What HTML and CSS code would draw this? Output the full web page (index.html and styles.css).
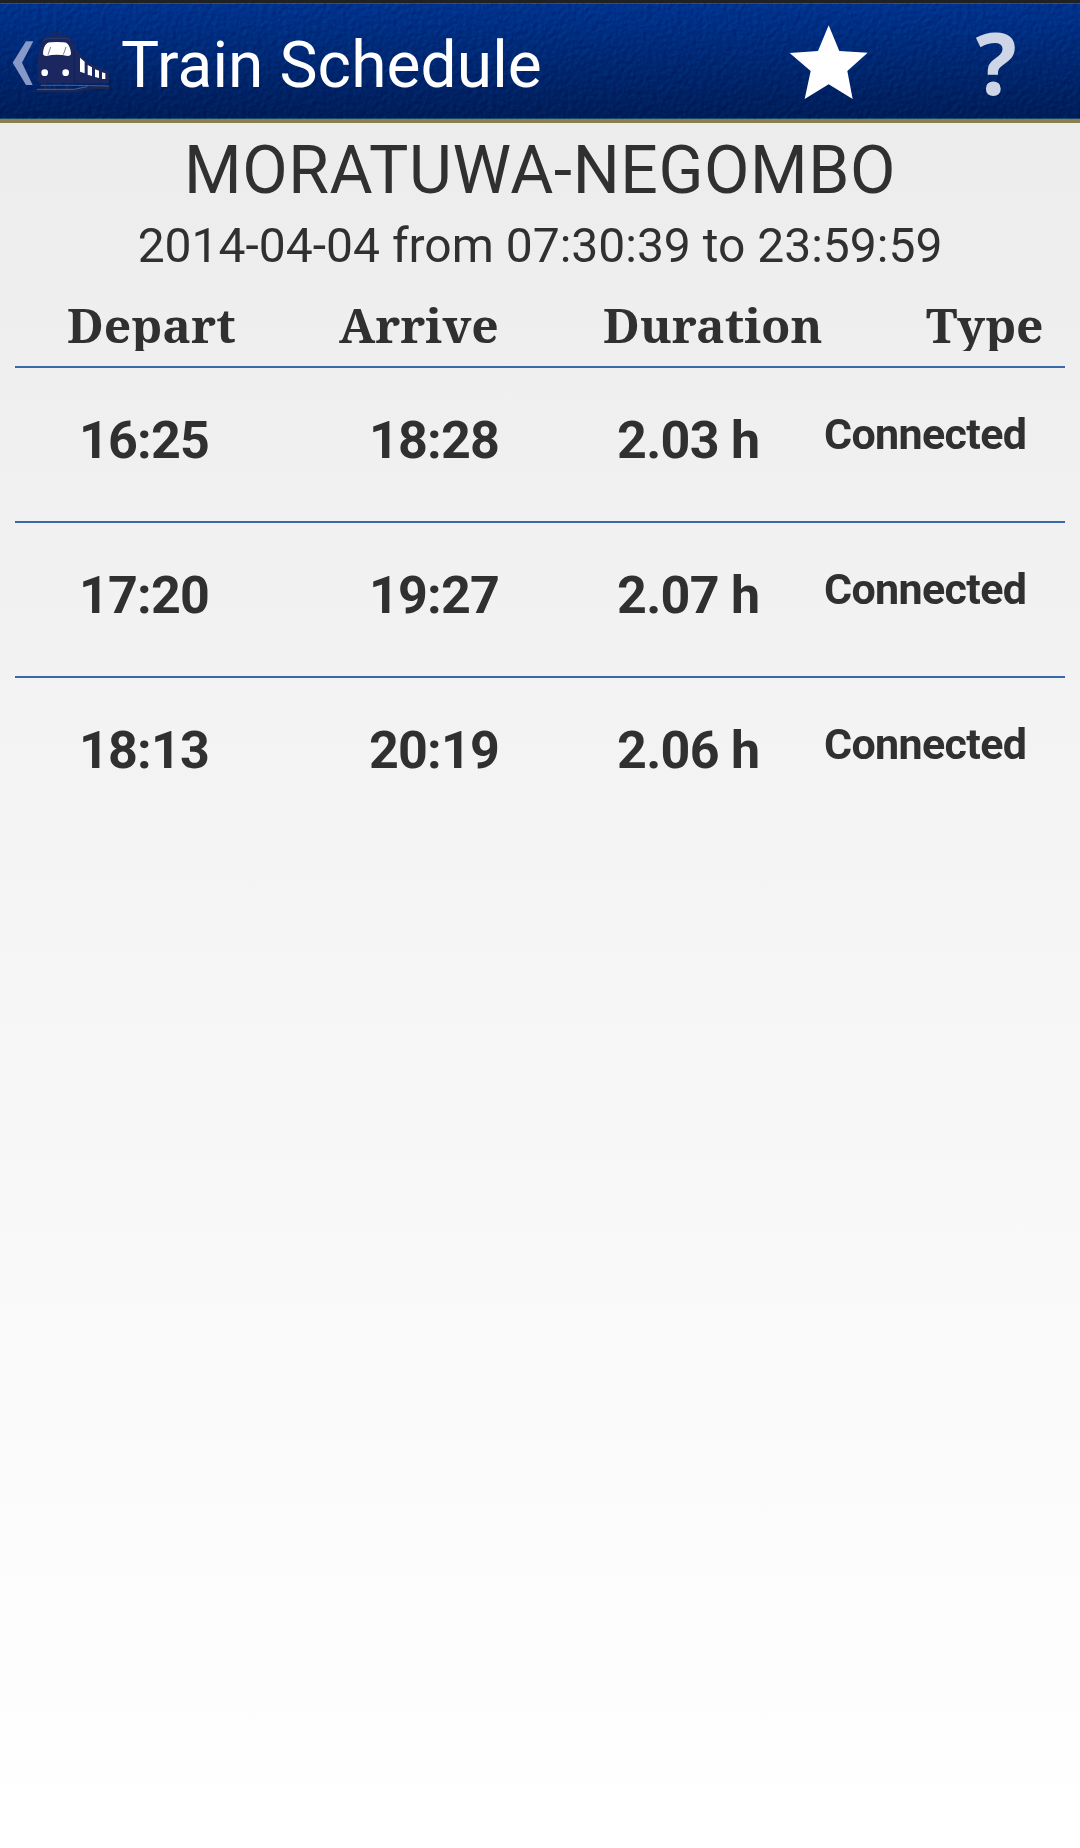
FILE: index.html
```
<!DOCTYPE html>
<html lang="en">
<head>
    <meta charset="UTF-8">
    <meta name="viewport" content="width=device-width, initial-scale=1.0">
    <title>Train Schedule</title>
    <link rel="stylesheet" href="styles.css">
</head>
<body>

    <header class="bar">
        <!-- leather grain -->
        <svg class="grain" width="1080" height="116">
            <filter id="leather" x="0" y="0" width="100%" height="100%" color-interpolation-filters="sRGB">
                <feTurbulence type="fractalNoise" baseFrequency="0.2" numOctaves="2" seed="4"/>
                <feDiffuseLighting surfaceScale="1.6" diffuseConstant="0.7" lighting-color="#fff">
                    <feDistantLight azimuth="225" elevation="45"/>
                </feDiffuseLighting>
            </filter>
            <rect width="1080" height="116" filter="url(#leather)"/>
        </svg>
        <svg class="back" width="24" height="46" viewBox="33 120 72 138">
            <path d="M78 124h22l-34 64 32 67H78L38 188z" fill="#8699c8"/>
        </svg>
        <svg class="train" width="74" height="66" viewBox="108 90 222 198">
            <path d="M157 104v-6h26v6" fill="none" stroke="#1c2a60" stroke-width="3"/>
            <path d="M114 172Q118 132 132 112Q136 107 148 106H198Q208 107 213 114L226 142Q236 160 257 181Q276 197 327 214V250H122Q113 249 113 238z" fill="#1b2860"/>
            <path d="M130 124Q134 117 144 115H198Q206 116 210 122" fill="none" stroke="#33457c" stroke-width="2"/>
            <path d="M129 160Q130 138 142 129Q148 126 170 126Q194 126 200 129Q211 138 213 160Q213 168 203 168Q170 161 139 168Q129 168 129 160z" fill="#fff"/>
            <path d="M152 141l-8 23M198 141l-8 23" stroke="#38456e" stroke-width="2"/>
            <circle cx="134" cy="218" r="10" fill="#fff"/>
            <circle cx="197" cy="218" r="10" fill="#fff"/>
            <path d="M223 150V252" stroke="#101c4c" stroke-width="2"/>
            <path d="M240 173l14 12v35l-14-5zM263 195l13 7v26l-13-4zM285 208l12 4v22l-12-3zM306 217l10 3v17h-10z" fill="#fff"/>
            <path d="M111 273H225L272 263H327M135 250v20M163 250v20M200 250v20" fill="none" stroke="#1c2750" stroke-width="8"/>
            <path d="M122 256H222L327 258M111 268H222L262 260" fill="none" stroke="#6b7fa8" stroke-width="2"/>
        </svg>
        <h1 class="title">Train Schedule</h1>
        <svg class="star" width="80" height="76" viewBox="84 72 240 228">
            <path d="M206 76L238 153L323 158L262 213L278 297L206 253L134 297L152 213L89 159L174 153z" fill="#fff"/>
        </svg>
        <span class="help">?</span>
    </header>

    <h2 class="route">MORATUWA-NEGOMBO</h2>
    <p class="period">2014-04-04 from 07:30:39 to 23:59:59</p>

    <div class="schedule">
        <div class="head">
            <span>Depart</span>
            <span>Arrive</span>
            <span>Duration</span>
            <span>Type</span>
        </div>
        <div class="row">
            <span>16:25</span>
            <span>18:28</span>
            <span class="duration">2.03 h</span>
            <span class="type">Connected</span>
        </div>
        <div class="row">
            <span>17:20</span>
            <span>19:27</span>
            <span class="duration">2.07 h</span>
            <span class="type">Connected</span>
        </div>
        <div class="row">
            <span>18:13</span>
            <span>20:19</span>
            <span class="duration">2.06 h</span>
            <span class="type">Connected</span>
        </div>
    </div>

</body>
</html>
```
FILE: styles.css
```
body {
    margin: 0;
    min-height: 1848px;
    background: linear-gradient(#ebebeb, #ffffff);
    font-family: Roboto, sans-serif;
    color: #303030;
}

.bar {
    position: relative;
    display: flex;
    align-items: center;
    box-sizing: border-box;
    height: 123px;
    padding: 4px 0 0 11px;
    border-top: 3px solid #202122;
    border-bottom: 4px solid #8b7f50;
    background: linear-gradient(#00338f, #001d59);
    box-shadow: inset 0 1px #12599a, inset 0 -1px #174a6c;
}

.grain {
    position: absolute;
    top: 0;
    left: 0;
    mix-blend-mode: soft-light;
    opacity: 0.45;
}

.back,
.train,
.title,
.star,
.help {
    position: relative;
}

.train {
    margin-left: 1px;
}

.title {
    flex: 1;
    margin: 4px 0 0 11px;
    color: #fff;
    font-size: 64px;
    font-weight: 400;
    letter-spacing: 0.1px;
}

.star {
    margin-top: -2px;
}

.help {
    width: 168px;
    margin: -2px 0 0 44px;
    text-align: center;
    color: #cdd5e6;
    font-family: "Noto Sans", sans-serif;
    font-size: 86px;
    font-weight: 700;
    line-height: 116px;
}

.route {
    margin: 9px 0 0;
    text-align: center;
    font-size: 66px;
    font-weight: 400;
    line-height: 78px;
    letter-spacing: 0.6px;
}

.period {
    margin: 7px 0 0;
    text-align: center;
    font-size: 48px;
    line-height: 58px;
}

.schedule {
    margin: 20px 15px 0;
}

.head {
    display: grid;
    grid-template-columns: 272px 264px 323px 1fr;
    height: 56px;
    padding: 0 0 15px 52px;
    font-family: "Noto Serif", "Liberation Serif", serif;
    font-size: 48px;
    font-weight: 700;
    line-height: 59px;
}

/* descenders are cut off above the divider */
.head span {
    height: 56px;
    overflow: hidden;
}

.row {
    display: grid;
    grid-template-columns: 290px 248px 207px 1fr;
    align-items: baseline;
    box-sizing: border-box;
    height: 155px;
    padding: 42px 0 0 64px;
    border-top: 2px solid #3a68a8;
    font-size: 52px;
    font-weight: 700;
    line-height: 61px;
    letter-spacing: -0.8px;
}

.duration {
    letter-spacing: -0.7px;
}

.type {
    align-self: start;
    font-size: 43px;
    line-height: 49px;
    letter-spacing: -0.65px;
}
```
